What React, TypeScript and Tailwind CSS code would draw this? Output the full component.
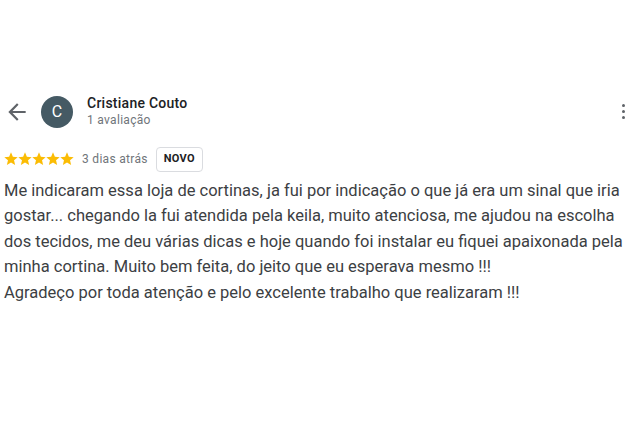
export default function App() {
  return (
    <div className="h-[441px] w-[634px] overflow-hidden bg-white font-['Roboto',sans-serif] text-[#3c4043]">
      <div className="flex items-center pt-[95px] pl-[4px] pr-[9px]">
        <svg width="26" height="26" viewBox="0 0 24 24" className="text-[#5f6368]">
          <path d="M20 11H7.83l5.59-5.59L12 4l-8 8 8 8 1.41-1.41L7.83 13H20v-2z" fill="currentColor" />
        </svg>
        <div className="ml-[11px] flex h-[32px] w-[32px] items-center justify-center rounded-full bg-[#455a64] text-[16px] text-white">
          C
        </div>
        <div className="ml-[14px] flex flex-col">
          <span className="text-[14px] font-medium leading-[17px] tracking-[0.25px] text-[#202124]">Cristiane Couto</span>
          <span className="text-[12px] leading-[16px] tracking-[0.3px] text-[#70757a]">1 avaliação</span>
        </div>
        <div className="ml-auto flex flex-col gap-[2.5px]">
          <span className="h-[3.5px] w-[3.5px] rounded-full bg-[#5f6368]" />
          <span className="h-[3.5px] w-[3.5px] rounded-full bg-[#5f6368]" />
          <span className="h-[3.5px] w-[3.5px] rounded-full bg-[#5f6368]" />
        </div>
      </div>
      <div className="mt-[19px] flex items-center pl-[4px]">
        <div className="flex">
          {[0, 1, 2, 3, 4].map((i) => (
            <svg key={i} width="14" height="14" viewBox="1.5 1.5 21 21">
              <path
                d="M12 17.27L18.18 21l-1.64-7.03L22 9.24l-7.19-.61L12 2 9.19 8.63 2 9.24l5.46 4.73L5.82 21z"
                fill="#fbbc04"
              />
            </svg>
          ))}
        </div>
        <span className="ml-[8px] text-[12px] tracking-[0.3px] text-[#70757a]">3 dias atrás</span>
        <span className="ml-[8px] rounded-[4px] border border-[#dadce0] px-[7px] py-[3px] text-[11px] font-bold tracking-[0.3px] text-[#202124]">
          NOVO
        </span>
      </div>
      <p className="mt-[6px] whitespace-nowrap px-[4px] text-[16.5px] leading-[25.5px] text-[#3c4043]">
        Me indicaram essa loja de cortinas, ja fui por indicação o que já era um sinal que iria
        <br />
        gostar... chegando la fui atendida pela keila, muito atenciosa, me ajudou na escolha
        <br />
        dos tecidos, me deu várias dicas e hoje quando foi instalar eu fiquei apaixonada pela
        <br />
        minha cortina. Muito bem feita, do jeito que eu esperava mesmo !!!
        <br />
        Agradeço por toda atenção e pelo excelente trabalho que realizaram !!!
      </p>
    </div>
  );
}
